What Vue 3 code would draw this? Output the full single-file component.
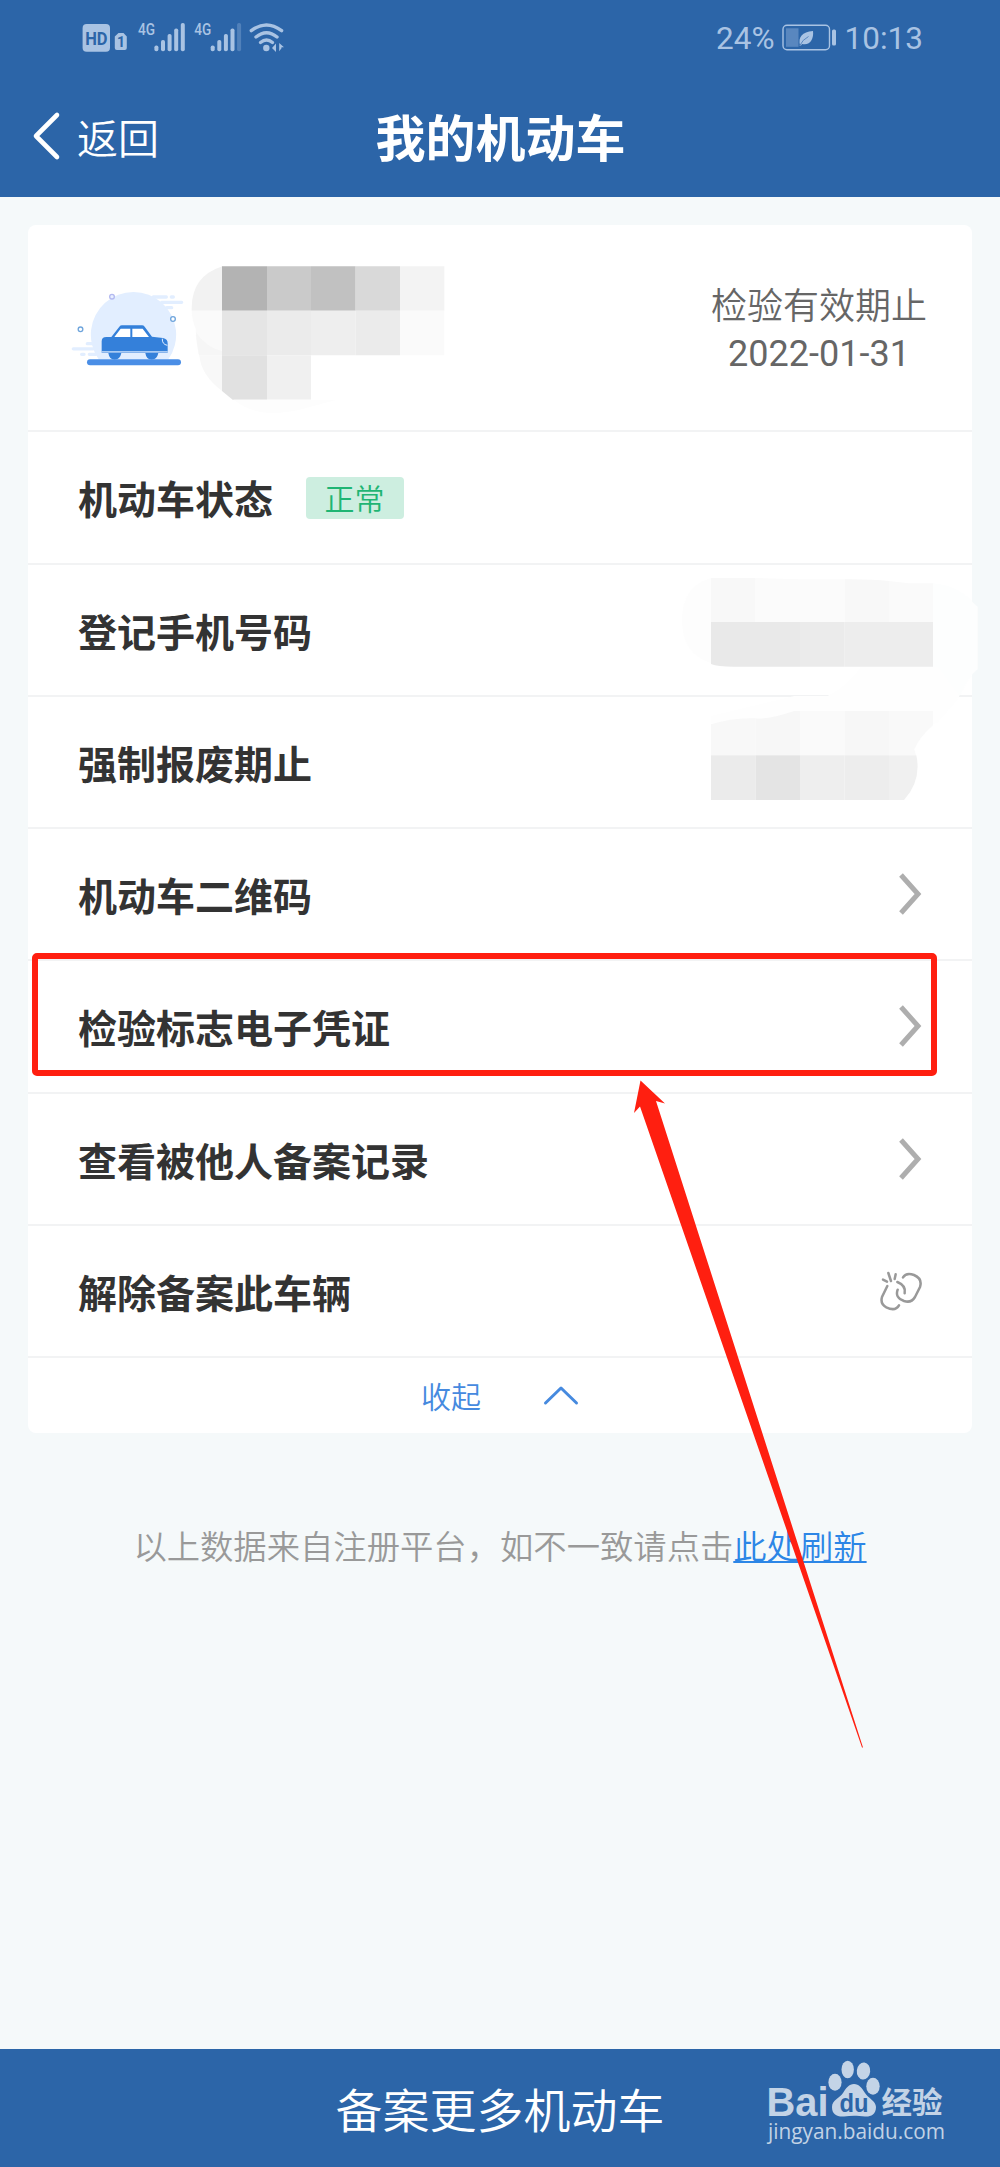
<script setup>
const rows = [
  { label: '机动车状态', tag: '正常' },
  { label: '登记手机号码' },
  { label: '强制报废期止' },
  { label: '机动车二维码', arrow: true },
  { label: '检验标志电子凭证', arrow: true },
  { label: '查看被他人备案记录', arrow: true },
  { label: '解除备案此车辆', unlink: true },
]

const signals = [
  { x: 136, last: 1 },
  { x: 192.3, last: 0.3 },
]
const bars = [45.5, 40, 34, 28.5, 23]
</script>

<template>
  <div class="page">
    <header class="top">
      <div class="status">
        <svg class="status-left" viewBox="80 0 210 80" width="210" height="80">
          <rect x="82.6" y="24" width="27.4" height="27.8" rx="4" class="ink" />
          <text x="85.2" y="44.500" textLength="22.4" lengthAdjust="spacingAndGlyphs" class="hd">HD</text>
          <path d="M118.5 33h5l3.3 3.5V48a2 2 0 0 1-2 2h-8a2 2 0 0 1-2-2V36.500z" class="ink" />
          <text x="117" y="47" class="sim">1</text>
          <g v-for="s in signals" :key="s.x">
            <text :x="s.x + 2" y="35.3" textLength="17" lengthAdjust="spacingAndGlyphs" class="net">4G</text>
            <rect
              v-for="(t, i) in bars"
              :key="i"
              :x="s.x + 18.4 + i * 6.6"
              :y="t"
              width="4"
              :height="51.3 - t"
              rx="1.8"
              class="ink"
              :opacity="i === 4 ? s.last : 1"
            />
          </g>
          <g class="wave">
            <path d="M251.300 30.700q15-11.500 30.300 0" />
            <path d="M256 37q10.500-8.500 21 0" />
            <path d="M260.500 42.500q6-5 12 0" />
          </g>
          <circle cx="266.300" cy="48" r="3.200" class="ink" />
          <path d="M276 43.500v8.500l-4-4zM279.200 43l4.800 4.300h-2.500v1l-2.300 3z" class="ink" />
        </svg>
        <div class="status-right">
          <span>24%</span>
          <svg class="battery" viewBox="780 23 57 30" width="57" height="30">
            <rect x="782" y="25.300" width="46.500" height="24.500" rx="4" fill="none" stroke="#a9c3e3" stroke-width="1.400" />
            <rect x="785" y="28.300" width="12.500" height="18.500" fill="#5987bf" />
            <path d="M799 45.500C797 37 801 32 812 31c1 8-3 15-11 13l-1 1.500z" class="ink" />
            <path d="M798.500 46q3-6.500 9-9.500" fill="none" stroke="#5987bf" stroke-width="1" />
            <rect x="831" y="29.500" width="4" height="16" rx="1.500" class="ink" />
          </svg>
          <span>10:13</span>
        </div>
      </div>
      <nav class="nav">
        <div class="back">
          <svg viewBox="0 0 30 50" width="30" height="50">
            <path d="M25 4L4 25l21 21" fill="none" stroke="#fff" stroke-width="4.600" stroke-linecap="round" stroke-linejoin="round" />
          </svg>
          <span>返回</span>
        </div>
        <h1>我的机动车</h1>
      </nav>
    </header>

    <main class="card">
      <section class="vehicle">
        <svg class="car" viewBox="30 140 350 245" width="116.670" height="81.670">
          <path d="M116 357a128 128 0 1 1 209 0z" fill="#e2eeff" />
          <g stroke="#e2eeff" stroke-width="10" stroke-linecap="round">
            <path d="M280 170h39M334 170h6M305 186h60M320 202h15M82 310h30M40 325.500h60M65 342h7M88 342h20" />
          </g>
          <g fill="#fff" stroke-width="4">
            <circle cx="156" cy="169" r="7" stroke="#b3b9f0" fill="#e8efff" />
            <circle cx="339" cy="236" r="7" stroke="#6fa5dc" />
            <circle cx="61.500" cy="267" r="7" stroke="#6fa5dc" />
          </g>
          <path d="M125 337v-34q0-13 14-13h15l24-31q3-4 8-4h60q5 0 8 4l22 30 33 4q14 3 14 16v28z" fill="#3480da" />
          <path d="M163 290l19-25h29v25zM217 290v-25h31l19 25z" fill="#fff" />
          <path d="M307 295q-1 17 15 20" fill="none" stroke="#e2eeff" stroke-width="3" />
          <path d="M125 334.500h198" stroke="#e2eeff" stroke-width="3" />
          <path d="M145 338h39q-4 20-20 20t-19-20zM256 338h39q-4 20-20 20t-19-20z" fill="#3480da" />
          <rect x="81" y="356.500" width="282" height="18.500" rx="9" fill="#4a8ee6" />
        </svg>
        <svg class="plate" viewBox="390 70 780 460" width="260" height="153.330">
          <path d="M487 80Q395 110 395 205v8h92z" fill="#f2f2f2" />
          <path d="M395 213h92v134h-70q-10-50-10-80-12-30-12-54z" fill="#fafafa" />
          <path d="M408 278q30 45 79 57v12h-70q-8-40-9-69z" fill="#f6f6f6" />
          <path d="M418 347h69v108q-64-48-69-108z" fill="#f8f8f8" />
          <path d="M486 80h135v133H486z" fill="#b3b3b3" />
          <path d="M621 80h132v133H621z" fill="#cacaca" />
          <path d="M753 80h134v133H753z" fill="#c1c1c1" />
          <path d="M887 80h133v133H887z" fill="#d9d9d9" />
          <path d="M1020 80h133v133h-133z" fill="#f3f3f3" />
          <path d="M486 213h135v134H486z" fill="#e5e5e5" />
          <path d="M621 213h132v134H621z" fill="#ebebeb" />
          <path d="M753 213h134v134H753z" fill="#eee" />
          <path d="M887 213h133v134H887z" fill="#ebebeb" />
          <path d="M1020 213h133v134h-133z" fill="#fafafa" />
          <path d="M486 347h135v133H518l-32-26z" fill="#e1e1e1" />
          <path d="M621 347h132v133H621z" fill="#f0f0f0" />
          <path d="M520 480h310l-80 22q-60 18-120 18-60-2-110-40z" fill="#fdfdfd" />
        </svg>
        <div class="expiry">
          <span>检验有效期止</span>
          <span class="date">2022-01-31</span>
        </div>
      </section>

      <section v-for="row in rows" :key="row.label" class="row">
        <span class="label">{{ row.label }}</span>
        <span v-if="row.tag" class="tag">{{ row.tag }}</span>
        <svg v-if="row.arrow" class="end" viewBox="0 0 24 42" width="24" height="42">
          <path d="M3 2l17 19L3 40" fill="none" stroke="#aeaeae" stroke-width="5" />
        </svg>
        <svg v-if="row.unlink" class="end unlink" viewBox="838 1232 132 126" width="44" height="42">
          <g fill="none" stroke="#999" stroke-width="7.500" stroke-linecap="round">
            <path d="M850 1261l12 6M866 1241l8 24M888 1245l-3 14" />
            <path d="M863 1280L847 1313Q841 1334 860 1344Q887 1357 898 1338" />
            <path d="M910 1254Q920 1238 943 1247Q969 1258 961 1283L946 1313Q935 1332 913 1325Q885 1315 894 1291" />
            <path d="M893 1268Q920 1279 915 1302" />
          </g>
        </svg>
      </section>

      <section class="fold">
        <span>收起</span>
        <svg viewBox="0 0 36 22" width="36" height="22">
          <path d="M2.500 19L18 4l15.500 15" fill="none" stroke="#468adf" stroke-width="3" stroke-linecap="round" stroke-linejoin="round" />
        </svg>
      </section>
    </main>

    <p class="note">以上数据来自注册平台，如不一致请点击<a>此处刷新</a></p>

    <footer class="bottom">备案更多机动车</footer>

    <!-- pixelated cover over the phone number and scrap date -->
    <svg class="cover" viewBox="0 0 330 260" width="330" height="260">
      <g transform="scale(.33333)">
        <path d="M123 54Q36 80 36 180T123 310z" fill="#fdfdfd" />
        <path d="M789 70q70 5 118 55l16 15v188q-30 25-46 66-30 50-88 100z" fill="#fdfefe" />
        <path d="M123 320h680l65 88-65 80H123v-20l250-60h100q60-30 100-88z" fill="#fefefe" />
        <path d="M123 54h134v132H123z" fill="#f8f8f8" />
        <path d="M257 54l133 4h134v128H257z" fill="#fbfbfb" />
        <path d="M524 58q80-1 133 5v123H524z" fill="#f8f8f8" />
        <path d="M657 63l60 7h72v116H657z" fill="#fafafa" />
        <path d="M123 186h267v134H190q-47 0-67-8z" fill="#e9e9e9" />
        <path d="M390 186h134v134H390z" fill="#ebebeb" />
        <path d="M524 186h265v134H524z" fill="#ededed" />
        <path d="M123 493q70-22 134-18v111H123z" fill="#f8f8f8" />
        <path d="M257 475q40 4 115-22h18v133H257z" fill="#f7f7f7" />
        <path d="M390 453h134v133H390z" fill="#fafafa" />
        <path d="M524 453h133v133H524z" fill="#f7f7f7" />
        <path d="M657 453h132v43q-40 34-56 72l5 18h-81z" fill="#f9f9f9" />
        <path d="M123 586h134v134H123z" fill="#ebebeb" />
        <path d="M257 586h133v134H257z" fill="#e4e4e4" />
        <path d="M390 586h134v134H390z" fill="#eee" />
        <path d="M524 586h133v134H524z" fill="#ededed" />
        <path d="M657 586h82q16 75-37 134h-45z" fill="#f0f0f0" />
      </g>
    </svg>

    <div class="highlight"></div>
    <svg class="pointer" viewBox="630 1076 240 676" width="240" height="676">
      <path d="M640.500 1080.500L665 1103.500l-9-2.500L863 1747.500h-1L640 1106.500l-6 6.500z" fill="#ff1f10" />
    </svg>

    <svg class="brand" viewBox="760 2050 200 100" width="200" height="100">
      <g fill="#fff" fill-opacity=".72">
        <text x="766.500" y="2115.500" textLength="62" lengthAdjust="spacingAndGlyphs" class="bai">Bai</text>
        <ellipse cx="835" cy="2082.300" rx="6.600" ry="8.500" />
        <ellipse cx="847.700" cy="2069.500" rx="6.200" ry="8.700" />
        <ellipse cx="863.500" cy="2071" rx="6.700" ry="8.500" transform="rotate(6 863.500 2071)" />
        <ellipse cx="873" cy="2086.300" rx="6.700" ry="8.500" />
        <path d="M854 2084c5 0 8 4 11 9s11 8 11 14c0 8-6 10-11 9.500-8-1-14-1-21 0-7 .5-12-2-12-9.500 0-7 8-9 11-14s6-9 11-9z" />
        <text x="881.500" y="2112.500" textLength="61" lengthAdjust="spacingAndGlyphs" class="jy">经验</text>
        <text x="768" y="2139" textLength="177" lengthAdjust="spacingAndGlyphs" class="url">jingyan.baidu.com</text>
      </g>
      <text x="839.500" y="2111.500" textLength="29" lengthAdjust="spacingAndGlyphs" class="du">du</text>
    </svg>
  </div>
</template>

<style>
body {
  margin: 0;
}
</style>

<style scoped>
.page {
  position: relative;
  display: flex;
  flex-direction: column;
  width: 1000px;
  height: 2167px;
  overflow: hidden;
  background: #f5f9fa;
  font-family: 'Noto Sans CJK SC', sans-serif;
}
.page svg {
  display: block;
  flex: none;
}
.top {
  height: 197px;
  background: #2c65a8;
  color: #fff;
}
.status {
  display: flex;
  justify-content: space-between;
  height: 80px;
  padding: 0 77px 0 80px;
}
.ink {
  fill: #a9c3e3;
}
.wave path {
  fill: none;
  stroke: #a9c3e3;
  stroke-width: 3.4;
  stroke-linecap: round;
}
.hd {
  font: 700 18px 'Roboto', sans-serif;
  fill: #2c65a8;
}
.sim {
  font: 700 14px 'Roboto', sans-serif;
  fill: #2c65a8;
}
.net {
  font: 500 17px 'Roboto', sans-serif;
  fill: #a9c3e3;
}
.status-right {
  display: flex;
  align-items: center;
  height: 76px;
  color: #a9c3e3;
  font: 31.5px 'Roboto', sans-serif;
}
.battery {
  margin: 0 7px 0 6px;
}
.nav {
  display: flex;
  align-items: center;
  justify-content: center;
  position: relative;
  height: 117px;
}
.back {
  position: absolute;
  left: 32px;
  top: 31px;
  display: flex;
  align-items: center;
  gap: 15px;
  height: 50px;
  font-size: 41px;
  font-weight: 350;
}
.nav h1 {
  margin: 0 0 7px 1px;
  font-size: 50px;
  line-height: 70px;
  font-weight: 700;
}
.card {
  display: flex;
  flex-direction: column;
  box-sizing: border-box;
  height: 1208px;
  margin: 28px 28px 0;
  border-radius: 8px;
  background: #fff;
}
.vehicle {
  display: flex;
  align-items: flex-start;
  box-sizing: border-box;
  height: 205.500px;
  padding: 0 45px 0 42px;
}
.car {
  margin-top: 61.700px;
}
.plate {
  margin: 38.300px 0 0 3.300px;
}
.expiry {
  display: flex;
  flex-direction: column;
  align-items: center;
  margin: 54px 0 0 auto;
  color: #666;
  font-size: 36px;
  line-height: 48px;
  font-weight: 350;
}
.date {
  margin-top: 3px;
  font-family: 'Roboto', sans-serif;
  font-weight: 400;
}
.row {
  display: flex;
  align-items: center;
  box-sizing: border-box;
  height: 132.400px;
  padding: 0 50px;
  border-top: 2px solid #f2f3f4;
}
.label {
  color: #333;
  font-size: 39px;
  line-height: 56px;
  font-weight: 700;
}
.tag {
  margin: 2px 0 0 32.500px;
  width: 98px;
  height: 42px;
  border-radius: 4px;
  background: #cdeee0;
  color: #1fb574;
  font-size: 30px;
  line-height: 40px;
  font-weight: 350;
  text-align: center;
}
.end {
  margin-left: auto;
}
.unlink {
  margin-right: -1px;
}
.fold {
  display: flex;
  align-items: center;
  justify-content: center;
  gap: 62px;
  height: 75px;
  border-top: 2px solid #f2f3f4;
  color: #468adf;
  font-size: 30px;
  font-weight: 350;
}
.note {
  margin: 88px 0 0;
  color: #999;
  font-size: 33.330px;
  line-height: 48px;
  font-weight: 350;
  text-align: center;
  white-space: nowrap;
}
.note a {
  color: #2c86e6;
  text-decoration: underline;
  text-decoration-thickness: 2px;
  text-underline-offset: 2px;
}
.bottom {
  height: 118.500px;
  margin-top: auto;
  background: #2c65a8;
  color: #fff;
  font-size: 47px;
  line-height: 117px;
  font-weight: 350;
  text-align: center;
}
.cover {
  position: absolute;
  left: 670px;
  top: 560px;
}
.highlight {
  position: absolute;
  left: 32px;
  top: 953px;
  box-sizing: border-box;
  width: 905px;
  height: 123px;
  border: 6px solid #ff1f10;
  border-radius: 5px;
}
.pointer {
  position: absolute;
  left: 630px;
  top: 1076px;
}
.brand {
  position: absolute;
  left: 760px;
  top: 2050px;
}
.bai {
  font: 700 41px 'Liberation Sans', sans-serif;
}
.jy {
  font: 700 30px 'Noto Sans CJK SC', sans-serif;
}
.url {
  font: 400 22px 'Open Sans', sans-serif;
}
.du {
  font: 700 26px 'Liberation Sans', sans-serif;
  fill: #2c65a8;
}
</style>
